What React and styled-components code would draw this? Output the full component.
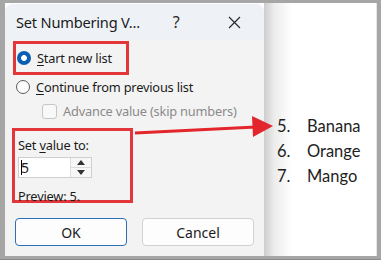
import React from 'react'
import styled, { createGlobalStyle } from 'styled-components'

const GlobalStyle = createGlobalStyle`
  html, body { margin: 0; padding: 0; background: #fff; }
  body { font-family: "Noto Sans", "Open Sans", sans-serif; }
`

// outer grey frame of the screenshot
const Frame = styled.div`
  position: relative;
  width: 381px;
  height: 260px;
  box-sizing: border-box;
  background: #a6a6a6;
  padding: 3px 4px 3px 5px;
  border-bottom: 1px solid #8a8a8a;
  display: flex;
`
const Canvas = styled.div`
  flex: 1;
  display: flex;
  margin-left: -5px;
  padding-left: 5px;
  background: linear-gradient(to right, #a6a6a6 5px, #fff 5px);
`
const Dialog = styled.div`
  width: 259px;
  margin-top: 1px;
  background: #f3f3f3;
  border-radius: 8px 8px 0 0;
  display: flex;
  flex-direction: column;
  color: #1b1b1b;
  font-size: 12.8px;
  letter-spacing: -0.2px;
`
const TitleBar = styled.div`
  height: 36px;
  display: flex;
  align-items: center;
  padding-left: 11px;
  background: #eef2f7;
  border-radius: 8px 8px 0 0;
  font-size: 14.6px;
`
const Title = styled.span`
  width: 150px;
`
const TitleIcon = styled.span`
  width: ${p => p.w}px;
  margin-left: ${p => p.ml || 0}px;
  display: flex;
  justify-content: center;
  font-size: 16px;
  color: #2a2a2a;
`
const Body = styled.div`
  flex: 1;
  display: flex;
  flex-direction: column;
  padding: 1px 0 0 8px;
`
const Highlight = styled.div`
  border: 3px solid #e2363b;
  width: ${p => p.w}px;
  height: ${p => p.h}px;
  box-sizing: border-box;
  margin: ${p => p.mt || 0}px 0 0 ${p => p.ml || 0}px;
  display: flex;
  flex-direction: column;
  justify-content: ${p => (p.top ? 'flex-start' : 'center')};
`
const OptionRow = styled.label`
  display: flex;
  align-items: center;
  gap: 6px;
  height: 24px;
  padding-left: ${p => p.indent || 0}px;
  color: ${p => (p.disabled ? '#8a8a8a' : '#1b1b1b')};
`
const Radio = styled.span`
  width: 14px;
  height: 14px;
  box-sizing: border-box;
  border-radius: 50%;
  flex-shrink: 0;
  ${p => p.checked
    ? 'background: radial-gradient(circle, #fff 0 2.6px, #0a5fb4 3.2px);'
    : 'border: 1px solid #5c5c5c; background: #fbfbfb;'}
`
const Check = styled.span`
  width: 15px;
  height: 15px;
  box-sizing: border-box;
  border: 1px solid #c6c6c6;
  border-radius: 3px;
  background: #f8f8f8;
`
const U = styled.span`
  text-decoration: underline;
  text-underline-offset: 2px;
`
const FieldLabel = styled.div`
  padding-left: 3px;
  line-height: ${p => p.lh || 20}px;
  margin-top: ${p => p.mt || 0}px;
`
const SpinBox = styled.div`
  margin: 2px 0 0 3px;
  width: 74px;
  height: 26px;
  box-sizing: border-box;
  border: 1px solid #cfcfcf;
  background: #fff;
  display: flex;
`
const SpinValue = styled.div`
  flex: 1;
  display: flex;
  align-items: center;
  padding-left: 2px;
  font-size: 14px;
  &::before {
    content: '';
    width: 1px;
    height: 15px;
    background: #000;
    margin-right: -1px;
  }
`
const SpinButtons = styled.div`
  width: 20px;
  display: flex;
  flex-direction: column;
  border-left: 1px solid #dcdcdc;
`
const SpinBtn = styled.div`
  flex: 1;
  display: flex;
  align-items: center;
  justify-content: center;
  background: #f7f7f7;
  & + & { border-top: 1px solid #dcdcdc; }
`
const ButtonRow = styled.div`
  display: flex;
  gap: 15px;
  margin: 15px 0 0 2px;
`
const Button = styled.div`
  width: 112px;
  height: 28px;
  box-sizing: border-box;
  border-radius: 4px;
  background: #fdfdfd;
  border: 1px solid ${p => (p.primary ? '#2a6fb5' : '#d1d1d1')};
  display: flex;
  align-items: center;
  justify-content: center;
  font-size: 14px;
  letter-spacing: 0;
`
const ListPane = styled.div`
  flex: 1;
  background: linear-gradient(to right, #cdcdcd, #ececec 10px, #fff 28px);
  border-right: 1px solid #e6e6e6;
  display: flex;
  flex-direction: column;
  padding: 110px 0 0 13px;
  font-family: "Lato", "Open Sans", sans-serif;
  font-size: 16.5px;
  color: #1e1e1e;
`
const ListItem = styled.div`
  display: flex;
  height: 25px;
  align-items: center;
`
const Num = styled.span`
  width: 30px;
`
const Arrow = styled.svg`
  position: absolute;
  left: 0;
  top: 0;
  pointer-events: none;
`

const Triangle = ({ up }) => (
  <svg width="8" height="5" viewBox="0 0 8 5">
    <path d={up ? 'M0 5 L4 0 L8 5 Z' : 'M0 0 L4 5 L8 0 Z'} fill="#333" />
  </svg>
)

export default function App() {
  return (
    <>
      <GlobalStyle />
      <Frame>
        <Canvas>
          <Dialog>
            <TitleBar>
              <Title>Set Numbering V...</Title>
              <TitleIcon w={20}>?</TitleIcon>
              <TitleIcon w={16} ml={40}>
                <svg width="13" height="13" viewBox="0 0 13 13">
                  <path d="M1 1 L12 12 M12 1 L1 12" stroke="#2a2a2a" strokeWidth="1.2" />
                </svg>
              </TitleIcon>
            </TitleBar>
            <Body>
              <Highlight w={116} h={34}>
                <OptionRow indent={1}>
                  <Radio checked />
                  <span><U>S</U>tart new list</span>
                </OptionRow>
              </Highlight>
              <OptionRow indent={3}>
                <Radio />
                <span><U>C</U>ontinue from previous list</span>
              </OptionRow>
              <OptionRow indent={29} disabled>
                <Check />
                <span>Advance value (skip numbers)</span>
              </OptionRow>
              <Highlight w={121} h={75} ml={-1} mt={5} top>
                <FieldLabel mt={4}>Set <U>v</U>alue to:</FieldLabel>
                <SpinBox>
                  <SpinValue>5</SpinValue>
                  <SpinButtons>
                    <SpinBtn><Triangle up /></SpinBtn>
                    <SpinBtn><Triangle /></SpinBtn>
                  </SpinButtons>
                </SpinBox>
                <FieldLabel lh={18} mt={9}>Preview: 5.</FieldLabel>
              </Highlight>
              <ButtonRow>
                <Button primary>OK</Button>
                <Button>Cancel</Button>
              </ButtonRow>
            </Body>
          </Dialog>
          <ListPane>
            <ListItem><Num>5.</Num>Banana</ListItem>
            <ListItem><Num>6.</Num>Orange</ListItem>
            <ListItem><Num>7.</Num>Mango</ListItem>
          </ListPane>
        </Canvas>
        <Arrow width="381" height="260" viewBox="0 0 381 260">
          <path d="M135 133 L256 127" stroke="#e2262b" strokeWidth="3" />
          <path d="M252 116 L273 126 L253 137 Z" fill="#e2262b" />
        </Arrow>
      </Frame>
    </>
  )
}
